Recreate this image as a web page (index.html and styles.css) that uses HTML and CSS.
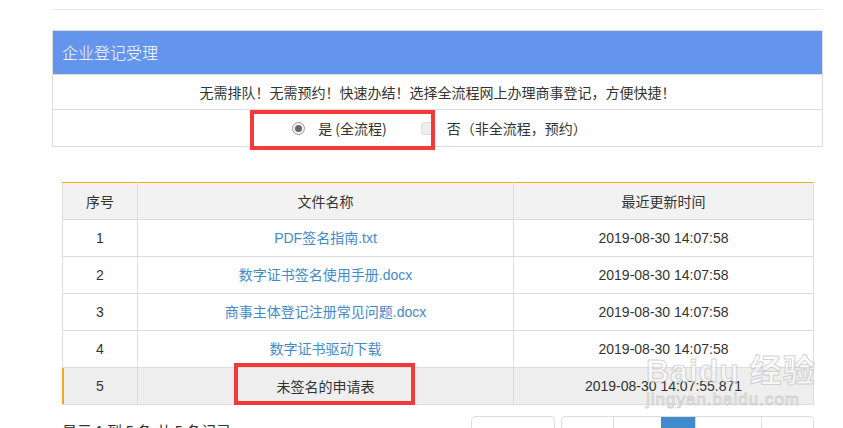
FILE: index.html
```html
<!DOCTYPE html>
<html lang="zh-CN">
<head>
  <meta charset="UTF-8">
  <title>企业登记受理</title>
  <link rel="stylesheet" href="styles.css">
</head>
<body>
  <div class="page">
    <div class="top-line"></div>

    <div class="panel">
      <div class="panel-title">企业登记受理</div>
      <div class="panel-row">无需排队！无需预约！快速办结！选择全流程网上办理商事登记，方便快捷！</div>
      <div class="panel-row options">
        <label class="option"><span class="radio checked"></span>是 (全流程)</label>
        <label class="option"><span class="radio"></span>否（非全流程，预约）</label>
      </div>
    </div>

    <table class="files">
      <thead>
        <tr>
          <th class="col-no">序号</th>
          <th class="col-name">文件名称</th>
          <th>最近更新时间</th>
        </tr>
      </thead>
      <tbody>
        <tr><td>1</td><td><a href="#">PDF签名指南.txt</a></td><td>2019-08-30 14:07:58</td></tr>
        <tr><td>2</td><td><a href="#">数字证书签名使用手册.docx</a></td><td>2019-08-30 14:07:58</td></tr>
        <tr><td>3</td><td><a href="#">商事主体登记注册常见问题.docx</a></td><td>2019-08-30 14:07:58</td></tr>
        <tr><td>4</td><td><a href="#">数字证书驱动下载</a></td><td>2019-08-30 14:07:58</td></tr>
        <tr class="selected"><td>5</td><td class="plain">未签名的申请表</td><td>2019-08-30 14:07:55.871</td></tr>
      </tbody>
    </table>

    <div class="footer">
      <div class="summary">显示 1 到 5 条,共 5 条记录</div>
      <div class="pager">
        <div class="page-size">10 ▾</div>
        <ul class="pages">
          <li>首页</li>
          <li>上一页</li>
          <li class="active">1</li>
          <li>下一页</li>
          <li>尾页</li>
        </ul>
      </div>
    </div>

    <div class="mark mark-radio"></div>
    <div class="mark mark-row"></div>

    <div class="watermark">
      <div class="wm-logo">Bai<span class="paw">du</span> 经验</div>
      <div class="wm-url">jingyan.baidu.com</div>
    </div>
  </div>
</body>
</html>
```

FILE: styles.css
```css
body {
  margin: 0;
  font-family: "Liberation Sans", "Noto Sans CJK SC", sans-serif;
  font-size: 14px;
  color: #333;
  background: #fff;
}
.page {
  position: relative;
  height: 428px;
  overflow: hidden;
  padding: 0 20px 0 52px;
}
.top-line {
  height: 9px;
  width: 771px;
  border-bottom: 1px solid #e8e8e8;
}
.panel {
  width: 769px;
  margin-top: 20px;
  border: 1px solid #ddd;
}
.panel-title {
  height: 43px;
  line-height: 43px;
  padding-left: 9px;
  background: #6495ed;
  color: #fff;
  font-size: 16px;
  font-family: "Noto Sans CJK SC", sans-serif;
  font-weight: 300;
}
.panel-row {
  height: 34px;
  line-height: 34px;
  text-align: center;
  border-top: 1px solid #ddd;
  font-family: "Noto Sans CJK SC", sans-serif;
  font-size: 14px;
}
.options {
  height: 36px;
  line-height: 36px;
  display: flex;
  justify-content: center;
  gap: 34px;
  padding-left: 4px;
}
.option {
  display: flex;
  align-items: center;
  gap: 13px;
}
.radio {
  width: 11px;
  height: 11px;
  border: 1px solid #999;
  border-radius: 50%;
  background: #f4f4f4;
  position: relative;
}
.radio.checked::after {
  content: "";
  position: absolute;
  left: 2px;
  top: 2px;
  width: 7px;
  height: 7px;
  border-radius: 50%;
  background: #666;
}
.radio:not(.checked) {
  border-color: #ddd;
  background: #eee;
  border-radius: 3px;
}
.files {
  width: 752px;
  margin: 35px 0 0 10px;
  border-collapse: collapse;
  border-top: 1px solid #f5a623;
}
.files th,
.files td {
  height: 20px;
  padding: 8px;
  line-height: 20px;
  text-align: center;
  border: 1px solid #ddd;
  font-weight: normal;
}
.files thead th {
  border-top: 1px solid #f5a623;
  background: #f2f2f2;
  font-family: "Noto Sans CJK SC", sans-serif;
  font-size: 14px;
}
.col-no { width: 58px; }
.col-name { width: 359px; }
.files a {
  color: #428bca;
  text-decoration: none;
}
.files .plain {
  color: #333;
  font-family: "Noto Sans CJK SC", sans-serif;
  font-size: 14px;
}
.files tr.selected td {
  background: #eee;
}
.files tr.selected td:first-child {
  box-shadow: inset 1px 0 0 #f5a623;
  border-left-color: #f5a623;
}
.footer {
  width: 752px;
  margin-left: 10px;
  display: flex;
  justify-content: space-between;
  align-items: flex-start;
}
.summary {
  margin-top: 15px;
  font-size: 15px;
  font-family: "Noto Sans CJK SC", sans-serif;
}
.pager {
  display: flex;
  gap: 6px;
  margin-top: 11px;
}
.page-size {
  width: 82px;
  height: 32px;
  line-height: 32px;
  border: 1px solid #ddd;
  border-radius: 4px;
  text-align: center;
}
.pages {
  display: flex;
  margin: 0;
  padding: 0;
  list-style: none;
  border: 1px solid #ddd;
  border-radius: 4px;
}
.pages li {
  box-sizing: border-box;
  height: 32px;
  line-height: 36px;
  text-align: center;
  border-left: 1px solid #ddd;
  color: #888;
  font-family: "Noto Sans CJK SC", sans-serif;
}
.pages li:nth-child(1) { width: 51px; border-left: 0; }
.pages li:nth-child(2) { width: 48px; }
.pages li:nth-child(3) { width: 34px; }
.pages li:nth-child(4) { width: 66px; }
.pages li:nth-child(5) { width: 52px; }
.pages li.active {
  background: #428bca;
  color: #fff;
  border-color: #428bca;
}
.mark {
  position: absolute;
  border: 4px solid #f53838;
}
.mark-radio {
  left: 250px;
  top: 110px;
  width: 177px;
  height: 32px;
}
.mark-row {
  left: 234px;
  top: 363px;
  width: 173px;
  height: 34px;
}
.watermark {
  position: absolute;
  left: 646px;
  top: 354px;
  color: rgba(255, 255, 255, 0.5);
  -webkit-text-stroke: 1px rgba(200, 200, 200, 0.8);
  pointer-events: none;
}
.wm-logo {
  font-size: 32px;
  font-weight: bold;
  line-height: 34px;
  letter-spacing: 1px;
}
.wm-url {
  font-size: 17px;
  letter-spacing: 1px;
  margin-top: 2px;
}
```
